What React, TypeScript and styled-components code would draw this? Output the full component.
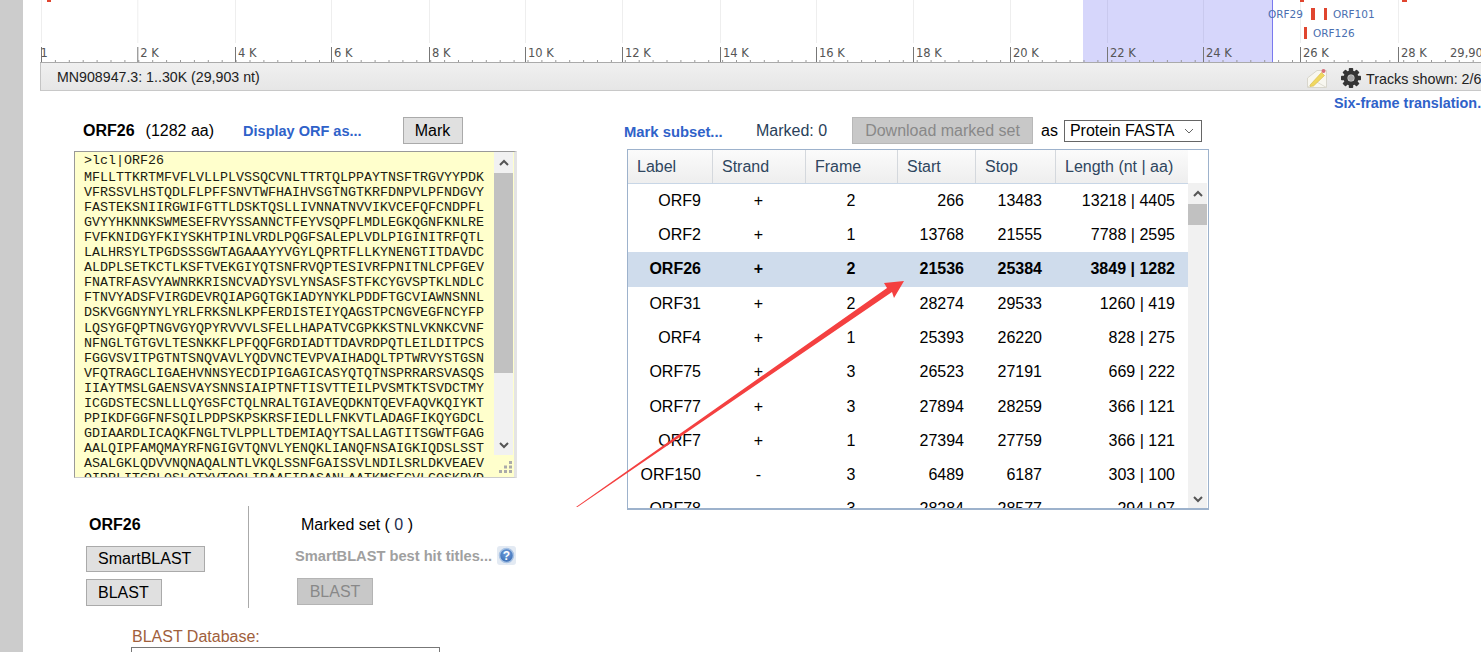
import React from 'react';
import styled, {createGlobalStyle} from "styled-components";

const sequence = [
    "MFLLTTKRTMFVFLVLLPLVSSQCVNLTTRTQLPPAYTNSFTRGVYYPDK",
    "VFRSSVLHSTQDLFLPFFSNVTWFHAIHVSGTNGTKRFDNPVLPFNDGVY",
    "FASTEKSNIIRGWIFGTTLDSKTQSLLIVNNATNVVIKVCEFQFCNDPFL",
    "GVYYHKNNKSWMESEFRVYSSANNCTFEYVSQPFLMDLEGKQGNFKNLRE",
    "FVFKNIDGYFKIYSKHTPINLVRDLPQGFSALEPLVDLPIGINITRFQTL",
    "LALHRSYLTPGDSSSGWTAGAAAYYVGYLQPRTFLLKYNENGTITDAVDC",
    "ALDPLSETKCTLKSFTVEKGIYQTSNFRVQPTESIVRFPNITNLCPFGEV",
    "FNATRFASVYAWNRKRISNCVADYSVLYNSASFSTFKCYGVSPTKLNDLC",
    "FTNVYADSFVIRGDEVRQIAPGQTGKIADYNYKLPDDFTGCVIAWNSNNL",
    "DSKVGGNYNYLYRLFRKSNLKPFERDISTEIYQAGSTPCNGVEGFNCYFP",
    "LQSYGFQPTNGVGYQPYRVVVLSFELLHAPATVCGPKKSTNLVKNKCVNF",
    "NFNGLTGTGVLTESNKKFLPFQQFGRDIADTTDAVRDPQTLEILDITPCS",
    "FGGVSVITPGTNTSNQVAVLYQDVNCTEVPVAIHADQLTPTWRVYSTGSN",
    "VFQTRAGCLIGAEHVNNSYECDIPIGAGICASYQTQTNSPRRARSVASQS",
    "IIAYTMSLGAENSVAYSNNSIAIPTNFTISVTTEILPVSMTKTSVDCTMY",
    "ICGDSTECSNLLLQYGSFCTQLNRALTGIAVEQDKNTQEVFAQVKQIYKT",
    "PPIKDFGGFNFSQILPDPSKPSKRSFIEDLLFNKVTLADAGFIKQYGDCL",
    "GDIAARDLICAQKFNGLTVLPPLLTDEMIAQYTSALLAGTITSGWTFGAG",
    "AALQIPFAMQMAYRFNGIGVTQNVLYENQKLIANQFNSAIGKIQDSLSST",
    "ASALGKLQDVVNQNAQALNTLVKQLSSNFGAISSVLNDILSRLDKVEAEV",
    "QIDRLITGRLQSLQTYVTQQLIRAAEIRASANLAATKMSECVLGQSKRVD",
];

const orfRows = [
    ["ORF9", "+", "2", "266", "13483", "13218 | 4405"],
    ["ORF2", "+", "1", "13768", "21555", "7788 | 2595"],
    ["ORF26", "+", "2", "21536", "25384", "3849 | 1282"],
    ["ORF31", "+", "2", "28274", "29533", "1260 | 419"],
    ["ORF4", "+", "1", "25393", "26220", "828 | 275"],
    ["ORF75", "+", "3", "26523", "27191", "669 | 222"],
    ["ORF77", "+", "3", "27894", "28259", "366 | 121"],
    ["ORF7", "+", "1", "27394", "27759", "366 | 121"],
    ["ORF150", "-", "3", "6489", "6187", "303 | 100"],
    ["ORF78", "-", "3", "28284", "28577", "294 | 97"],
];

const ticks = [
    {x: 41.5, label: "1"}, {x: 137.8, label: "2 K"}, {x: 235.5, label: "4 K"}, {x: 331.5, label: "6 K"},
    {x: 429.5, label: "8 K"}, {x: 525.5, label: "10 K"}, {x: 622.5, label: "12 K"}, {x: 720.5, label: "14 K"},
    {x: 816.5, label: "16 K"}, {x: 913.5, label: "18 K"}, {x: 1010.5, label: "20 K"}, {x: 1107.5, label: "22 K"},
    {x: 1203.5, label: "24 K"}, {x: 1300.5, label: "26 K"}, {x: 1398.5, label: "28 K"},
];

const minorTicks = Array.from({length: 104}, (_, i) => 41.5 + i * 13.9);

const Ruler = () => (
    <RulerSvg viewBox="40 0 1441 63" width="1441" height="63">
        <rect x="1083" y="0" width="189" height="63" fill="#d6d6fb"/>
        <line x1="1272.5" y1="0" x2="1272.5" y2="63" stroke="#7a7aee"/>
        {ticks.map(t => (
            <line key={t.x} x1={t.x} y1="0" x2={t.x} y2="43" stroke={t.x > 1083 && t.x < 1272 ? "#c9c9ee" : "#eeeeee"}/>
        ))}
        {minorTicks.map(x => (
            <line key={x} x1={x} y1="60" x2={x} y2="62" stroke="#999"/>
        ))}
        {ticks.map(t => (
            <g key={t.label}>
                <line x1={t.x} y1="47" x2={t.x} y2="63" stroke="#777"/>
                <RulerLabel x={t.label === "1" ? t.x - 1 : t.x + 2.5} y="57">{t.label}</RulerLabel>
            </g>
        ))}
        <RulerLabel x="1450" y="57">29,903</RulerLabel>
        <line x1="40" y1="62.5" x2="1481" y2="62.5" stroke="#aaa"/>
        <rect x="47" y="0" width="4" height="2" fill="#e0452f"/>
        <rect x="1300" y="0" width="4" height="2" fill="#e0452f"/>
        <rect x="1402" y="0" width="5" height="2" fill="#e0452f"/>
        <rect x="1311" y="8" width="4" height="12" fill="#e0452f"/>
        <rect x="1324" y="8" width="3" height="12" fill="#e0452f"/>
        <rect x="1304" y="27" width="3" height="12" fill="#e0452f"/>
        <OrfLabel x="1268" y="18">ORF29</OrfLabel>
        <OrfLabel x="1333" y="18">ORF101</OrfLabel>
        <OrfLabel x="1313" y="37">ORF126</OrfLabel>
    </RulerSvg>
);

const PencilIcon = () => (
    <svg width="20" height="20" viewBox="0 0 20 20">
        <path d="M0.5 10 L10 2.5 L19.5 2.5 L19.5 19.5 L0.5 19.5 Z" fill="#f8f7f0" stroke="#d8d6cc"/>
        <path d="M0.5 19.5 L8 13 L19.5 19.5" fill="none" stroke="#dedcd2"/>
        <path d="M3.5 16.5 L14.5 4.5 L17.5 7.5 L6.5 18 L3 18.5 Z" fill="#f0d860" stroke="#d8b840" strokeWidth="0.6"/>
        <circle cx="16.5" cy="3" r="2" fill="#d9707a"/>
    </svg>
);

const GearIcon = () => (
    <svg width="20" height="20" viewBox="0 0 20 20">
        <g fill="#353535">
            {[0, 45, 90, 135, 180, 225, 270, 315].map(a => (
                <rect key={a} x="7.8" y="0" width="4.4" height="5" rx="0.8" transform={`rotate(${a} 10 10)`}/>
            ))}
        </g>
        <circle cx="10" cy="10" r="5.5" fill="none" stroke="#353535" strokeWidth="4"/>
        <circle cx="10" cy="10" r="3" fill="#a8a8a8"/>
    </svg>
);

const HelpIcon = () => (
    <svg width="19" height="19" viewBox="0 0 19 19">
        <defs>
            <radialGradient id="helpFill" cx="50%" cy="35%" r="65%">
                <stop offset="0%" stopColor="#6f9ddc"/>
                <stop offset="100%" stopColor="#3a6db4"/>
            </radialGradient>
        </defs>
        <rect x="0" y="0" width="19" height="19" rx="3" fill="#e3eaf3"/>
        <circle cx="9.5" cy="9.5" r="7" fill="url(#helpFill)" stroke="#a9c3e4" strokeWidth="1.5"/>
        <HelpMark x="9.5" y="13.5">?</HelpMark>
    </svg>
);

const Chevron = ({up, size = 12, color = "#555", weight = 2}: { up?: boolean; size?: number; color?: string; weight?: number }) => (
    <svg width={size} height={size} viewBox="0 0 12 12">
        <polyline points={up ? "2,8 6,4 10,8" : "2,4 6,8 10,4"} fill="none" stroke={color} strokeWidth={weight}/>
    </svg>
);

const Arrow = () => (
    <ArrowSvg width="332" height="228" viewBox="575 280 332 228">
        <polygon points="576,507 887,288 884,283 904,281 894,298 892,292 577.5,507" fill="#f44040"/>
    </ArrowSvg>
);

export default function App() {
    return (
        <Page>
            <GlobalStyle/>
            <Gutter/>
            <Content>
                <Viewer>
                    <Ruler/>
                    <ViewerBar>
                        <SeqTitle>MN908947.3: 1..30K (29,903 nt)</SeqTitle>
                        <BarTools>
                            <PencilIcon/>
                            <GearIcon/>
                            <TracksText>Tracks shown: 2/6</TracksText>
                        </BarTools>
                    </ViewerBar>
                </Viewer>
                <SixFrameLink>Six-frame translation.</SixFrameLink>
                <Columns>
                    <LeftCol>
                        <OrfHead>
                            <OrfName>ORF26</OrfName>
                            <OrfSize>(1282 aa)</OrfSize>
                            <DisplayLink>Display ORF as...</DisplayLink>
                            <MarkButton>Mark</MarkButton>
                        </OrfHead>
                        <SeqBox>
                            <SeqText>
                                <SeqDefline>&gt;lcl|ORF26</SeqDefline>
                                {sequence.map(line => <div key={line}>{line}</div>)}
                            </SeqText>
                            <SeqScroll>
                                <ScrollEnd><Chevron up/></ScrollEnd>
                                <SeqThumb/>
                                <ScrollSpacer/>
                                <ScrollEnd><Chevron/></ScrollEnd>
                            </SeqScroll>
                            <Resizer width="14" height="14" viewBox="0 0 14 14">
                                <g fill="#aaa">
                                    <rect x="10" y="1" width="3" height="3"/>
                                    <rect x="5" y="5.5" width="3" height="3"/>
                                    <rect x="10" y="5.5" width="3" height="3"/>
                                    <rect x="0" y="10" width="3" height="3"/>
                                    <rect x="5" y="10" width="3" height="3"/>
                                    <rect x="10" y="10" width="3" height="3"/>
                                </g>
                            </Resizer>
                        </SeqBox>
                        <ActionsRow>
                            <OrfActions>
                                <ActionTitle>ORF26</ActionTitle>
                                <ActionButton $first>SmartBLAST</ActionButton>
                                <ActionButton>BLAST</ActionButton>
                            </OrfActions>
                            <MarkedActions>
                                <MarkedTitle>Marked set ( <MarkedZero>0</MarkedZero> )</MarkedTitle>
                                <BestHitRow>
                                    <BestHitText>SmartBLAST best hit titles...</BestHitText>
                                    <HelpIcon/>
                                </BestHitRow>
                                <DisabledButton>BLAST</DisabledButton>
                            </MarkedActions>
                        </ActionsRow>
                        <DatabaseLabel>BLAST Database:</DatabaseLabel>
                        <DatabaseInput/>
                    </LeftCol>
                    <RightCol>
                        <TableTools>
                            <SubsetLink>Mark subset...</SubsetLink>
                            <MarkedCount>Marked: 0</MarkedCount>
                            <DownloadButton>Download marked set</DownloadButton>
                            <AsLabel>as</AsLabel>
                            <FormatSelect>
                                Protein FASTA
                                <Chevron size={12} color="#666" weight={1}/>
                            </FormatSelect>
                        </TableTools>
                        <TableBox>
                            <TableMain>
                                <HeaderRow>
                                    {["Label", "Strand", "Frame", "Start", "Stop", "Length (nt | aa)"].map(h => (
                                        <HeaderCell key={h}>{h}</HeaderCell>
                                    ))}
                                </HeaderRow>
                                {orfRows.map(row => (
                                    <BodyRow key={row[0]} $selected={row[0] === "ORF26"}>
                                        <LabelCell>{row[0]}</LabelCell>
                                        <CenterCell>{row[1]}</CenterCell>
                                        <CenterCell>{row[2]}</CenterCell>
                                        <NumberCell $pad={12}>{row[3]}</NumberCell>
                                        <NumberCell $pad={14}>{row[4]}</NumberCell>
                                        <NumberCell $pad={13}>{row[5]}</NumberCell>
                                    </BodyRow>
                                ))}
                            </TableMain>
                            <TableScroll>
                                <ScrollEnd><Chevron up/></ScrollEnd>
                                <TableThumb/>
                                <ScrollSpacer/>
                                <ScrollEnd><Chevron/></ScrollEnd>
                            </TableScroll>
                        </TableBox>
                    </RightCol>
                </Columns>
            </Content>
            <Arrow/>
        </Page>
    );
}

const GlobalStyle = createGlobalStyle`
    html, body {
        margin: 0;
        height: 652px;
        overflow: hidden;
        background: #fff;
        font-family: "Liberation Sans", Arial, sans-serif;
    }
`;

const Page = styled.div`
    position: relative;
    display: flex;
    width: 1481px;
    height: 652px;
    overflow: hidden;
    color: #000;
    font-size: 16px;
`;

const Gutter = styled.div`
    flex: 0 0 23px;
    background: #cccccc;
`;

const Content = styled.div`
    flex: 1;
    min-width: 0;
`;

const Viewer = styled.div`
    margin-left: 17px;
`;

const RulerSvg = styled.svg`
    display: block;
`;

const RulerLabel = styled.text`
    font-family: "DejaVu Sans", sans-serif;
    font-size: 11.5px;
    fill: #555;
`;

const OrfLabel = styled.text`
    font-family: "DejaVu Sans", sans-serif;
    font-size: 10.5px;
    fill: #4a6fb0;
`;

const ViewerBar = styled.div`
    display: flex;
    align-items: center;
    justify-content: space-between;
    box-sizing: border-box;
    height: 28px;
    padding-left: 16px;
    background: linear-gradient(180deg, #f0f0f0, #e6e6e6);
    border-left: 1px solid #c4c4c4;
    border-bottom: 1px solid #c8c8c8;
`;

const SeqTitle = styled.span`
    font-size: 14.2px;
    color: #222;
`;

const BarTools = styled.div`
    display: flex;
    align-items: center;
    flex: 0 0 174px;
    min-width: 0;
    gap: 14px;
    padding-top: 3px;
    white-space: nowrap;
    svg {
        flex: none;
    }
`;

const TracksText = styled.span`
    flex: none;
    margin-left: -9px;
    padding-top: 1px;
    font-size: 14.3px;
    color: #222;
`;

const SixFrameLink = styled.div`
    margin: 3px 0 0 1311px;
    height: 18px;
    line-height: 18px;
    font-size: 14.4px;
    font-weight: 700;
    color: #2f62c9;
    white-space: nowrap;
`;

const Columns = styled.div`
    display: flex;
    margin-top: 5px;
`;

const LeftCol = styled.div`
    flex: 0 0 550px;
    margin-left: 51px;
`;

const OrfHead = styled.div`
    display: flex;
    align-items: center;
    height: 27px;
    padding-left: 9px;
`;

const OrfName = styled.span`
    font-weight: 700;
`;

const OrfSize = styled.span`
    margin-left: 11px;
`;

const DisplayLink = styled.span`
    margin-left: 29px;
    font-size: 14.5px;
    font-weight: 700;
    color: #2f62c9;
`;

const MarkButton = styled.div`
    box-sizing: border-box;
    display: flex;
    align-items: center;
    justify-content: center;
    width: 60px;
    height: 27px;
    margin-left: 41px;
    background: #e0e0e0;
    border: 1px solid #aaa;
`;

const SeqBox = styled.div`
    position: relative;
    display: flex;
    box-sizing: border-box;
    width: 443px;
    height: 327px;
    margin-top: 7px;
    overflow: hidden;
    background: #ffffcc;
    border-top: 1px solid #999;
    border-left: 1px solid #999;
    border-right: 3px solid #e4e4e4;
    border-bottom: 1px solid #ccc;
`;

const SeqText = styled.div`
    flex: 0 0 419px;
    box-sizing: border-box;
    padding: 1px 0 0 9px;
    font-family: "Liberation Mono", "Courier New", monospace;
    font-size: 13.33px;
    line-height: 15.1px;
    color: #1c1c10;
    white-space: pre;
`;

const SeqDefline = styled.div`
    margin-bottom: 1.5px;
`;

const SeqScroll = styled.div`
    display: flex;
    flex-direction: column;
    flex: 0 0 19px;
    height: 303px;
    background: #f1f1f1;
`;

const ScrollEnd = styled.div`
    display: flex;
    align-items: center;
    justify-content: center;
    flex: 0 0 21px;
`;

const ScrollSpacer = styled.div`
    flex: 1;
`;

const SeqThumb = styled.div`
    flex: 0 0 200px;
    background: #c1c1c1;
`;

const Resizer = styled.svg`
    position: absolute;
    right: 1px;
    bottom: 3px;
`;

const ActionsRow = styled.div`
    display: flex;
    height: 102px;
    margin-top: 28px;
`;

const OrfActions = styled.div`
    box-sizing: border-box;
    flex: 0 0 175px;
    padding: 10px 0 0 12px;
    border-right: 1px solid #aaa;
`;

const ActionTitle = styled.div`
    height: 18px;
    line-height: 18px;
    padding-left: 3px;
    font-weight: 700;
`;

const ActionButton = styled.div<{ $first?: boolean }>`
    box-sizing: border-box;
    width: ${p => p.$first ? 119 : 76}px;
    height: ${p => p.$first ? 26 : 27}px;
    line-height: ${p => p.$first ? 24 : 25}px;
    margin-top: ${p => p.$first ? 12 : 7}px;
    padding-left: 11px;
    background: #e0e0e0;
    border: 1px solid #aaa;
`;

const MarkedActions = styled.div`
    flex: 1;
    padding: 10px 0 0 46px;
`;

const MarkedTitle = styled.div`
    height: 18px;
    line-height: 18px;
    padding-left: 6px;
`;

const MarkedZero = styled.span`
    color: #1f3050;
`;

const BestHitRow = styled.div`
    display: flex;
    align-items: center;
    gap: 5px;
    height: 19px;
    margin-top: 12px;
`;

const BestHitText = styled.span`
    font-size: 14.67px;
    font-weight: 700;
    color: #a0a0a0;
    white-space: nowrap;
`;

const DisabledButton = styled.div`
    box-sizing: border-box;
    width: 76px;
    height: 27px;
    line-height: 25px;
    margin: 13px 0 0 2px;
    text-align: center;
    color: #888;
    background: #c8c8c8;
    border: 1px solid #b4b4b4;
`;

const DatabaseLabel = styled.div`
    height: 18px;
    line-height: 18px;
    margin: 20px 0 0 58px;
    color: #a0603c;
`;

const DatabaseInput = styled.div`
    box-sizing: border-box;
    width: 309px;
    height: 30px;
    margin: 1px 0 0 57px;
    border: 1px solid #777;
`;

const RightCol = styled.div`
    flex: 1;
    min-width: 0;
`;

const TableTools = styled.div`
    display: flex;
    align-items: center;
    height: 27px;
    white-space: nowrap;
`;

const SubsetLink = styled.span`
    flex: 0 0 132px;
    padding-top: 2px;
    font-size: 14.8px;
    font-weight: 700;
    color: #2f62c9;
`;

const MarkedCount = styled.span`
    flex: 0 0 96px;
    color: #2a3f5a;
`;

const DownloadButton = styled.div`
    box-sizing: border-box;
    width: 181px;
    height: 27px;
    line-height: 25px;
    text-align: center;
    color: #888;
    background: #c8c8c8;
    border: 1px solid #b8b8b8;
`;

const AsLabel = styled.span`
    margin-left: 8px;
`;

const FormatSelect = styled.div`
    box-sizing: border-box;
    display: flex;
    align-items: center;
    justify-content: space-between;
    width: 138px;
    height: 22px;
    margin-left: 6px;
    padding: 0 6px 0 5px;
    border: 1px solid #666;
`;

const TableBox = styled.div`
    display: flex;
    box-sizing: border-box;
    width: 582px;
    height: 361px;
    margin: 5px 0 0 3px;
    overflow: hidden;
    border: 1px solid #9db2cc;
    border-bottom-width: 2px;
`;

const TableMain = styled.div`
    flex: 0 0 560px;
`;

const columns = "85px 93px 92px 78px 80px 132px";

const HeaderRow = styled.div`
    display: grid;
    grid-template-columns: ${columns};
    box-sizing: border-box;
    height: 33.8px;
    background: linear-gradient(180deg, #fbfbfb, #eeeeee);
    border-bottom: 1px solid #c8d6e6;
`;

const HeaderCell = styled.div`
    padding-left: 9px;
    line-height: 33px;
    color: #2f465f;
    border-right: 1px solid #d4d8dd;
    &:last-child {
        border-right: 0;
    }
`;

const BodyRow = styled.div<{ $selected?: boolean }>`
    display: grid;
    grid-template-columns: ${columns};
    height: 34.3px;
    line-height: 34.3px;
    font-weight: ${p => p.$selected ? 700 : 400};
    background: ${p => p.$selected ? "#cfdcec" : "transparent"};
`;

const LabelCell = styled.div`
    padding-right: 12px;
    text-align: right;
`;

const CenterCell = styled.div`
    padding-right: 2px;
    text-align: center;
`;

const NumberCell = styled.div<{ $pad: number }>`
    padding-right: ${p => p.$pad}px;
    text-align: right;
`;

const TableScroll = styled.div`
    display: flex;
    flex-direction: column;
    flex: 0 0 19px;
    height: 326px;
    margin-top: 33px;
    background: #f1f1f1;
`;

const TableThumb = styled.div`
    flex: 0 0 21px;
    background: #c1c1c1;
`;

const HelpMark = styled.text`
    font-family: "Liberation Sans", Arial, sans-serif;
    font-size: 12px;
    font-weight: 700;
    text-anchor: middle;
    fill: #fff;
`;

const ArrowSvg = styled.svg`
    position: absolute;
    left: 575px;
    top: 280px;
    pointer-events: none;
`;
